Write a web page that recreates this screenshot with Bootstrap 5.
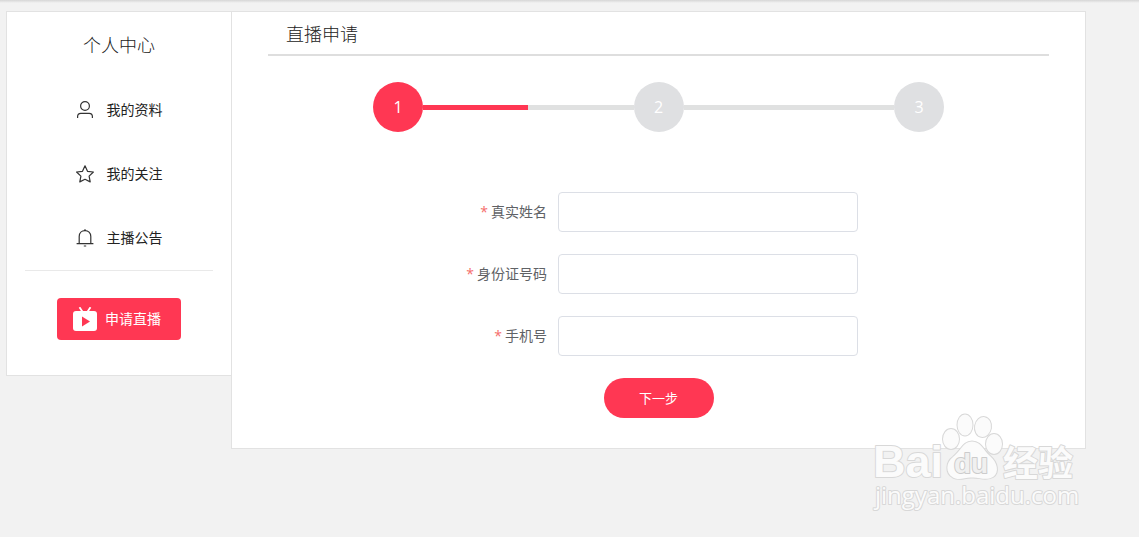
<!DOCTYPE html>
<html lang="zh-CN">
<head>
<meta charset="utf-8">
<meta name="viewport" content="width=device-width, initial-scale=1">
<title>直播申请</title>
<link href="https://cdn.jsdelivr.net/npm/bootstrap@5.3.0/dist/css/bootstrap.min.css" rel="stylesheet">
<style>
  :root { --live-red: #ff3753; --live-line: #e2e2e2; --step-gray: #dfe0e2; }
  body {
    font-family: "Open Sans", "Noto Sans CJK SC", sans-serif;
    font-size: 14px; line-height: 20px; font-weight: 400;
    color: #222; background: #f2f2f2;
    min-height: 100vh;
  }
  .top-edge { height: 3px; background: linear-gradient(#d6d6d6, #f2f2f2); }
  .page { padding: 8px 53px 0 6px; }
  .panel { background: #fff; border: 1px solid var(--live-line); }
  .side { width: 226px; padding: 19px 18px 35px; }
  .side .title { margin-bottom: 19px; }
  .content { margin-left: -1px; padding: 0 36px 30px; min-width: 0; }
  .title { font-size: 18px; line-height: 28px; font-weight: 300; margin: 0; }
  .side-menu a { height: 64px; gap: 13px; color: #222; text-decoration: none; }
  .side-menu svg { width: 18px; height: 18px; fill: none; stroke: #333; stroke-width: 1.2; }
  .side-rule { border-top: 1px solid #e9e9e9; }
  .side-action { padding-top: 27px; }
  .btn-live {
    --bs-btn-color: #fff; --bs-btn-bg: var(--live-red);
    --bs-btn-hover-color: #fff; --bs-btn-hover-bg: #e8304a;
    --bs-btn-active-color: #fff; --bs-btn-active-bg: #d82a43;
    --bs-btn-border-width: 0px; --bs-btn-font-weight: 400;
    --bs-btn-line-height: 20px;
  }
  .btn-apply { --bs-btn-font-size: 14px; --bs-btn-border-radius: 4px; width: 124px; height: 42px; gap: 8px; padding: 0 4px 0 0; }
  .btn-next { --bs-btn-font-size: 13px; width: 110px; height: 40px; padding: 0; }
  .content-head { padding: 8px 18px 6px; border-bottom: 2px solid #dedede; }
  .steps { width: 571px; max-width: 100%; margin: 26px auto 60px; }
  .step { width: 50px; height: 50px; background: var(--step-gray); color: #fff; font-size: 16px; font-weight: 400; }
  .step.current { background: var(--live-red); }
  .step-line { height: 5px; background: #e0e1e1; }
  .step-line .progress-bar { background: var(--live-red); }
  .apply-form { width: 401px; max-width: 100%; }
  .apply-form .form-row { margin-bottom: 22px; }
  .apply-form label { width: 100px; padding-right: 11px; text-align: right; color: #606266; }
  .apply-form label span { color: #f56c6c; margin-right: 3px; }
  .apply-form .form-control { max-width: 300px; height: 40px; border-color: #dcdfe6; border-radius: 4px; font-size: 14px; color: #606266; }
  .watermark { right: 56px; bottom: 19px; width: 216px; height: 108px; pointer-events: none; }
</style>
</head>
<body class="position-relative">
<div class="top-edge"></div>
<div class="page d-flex align-items-start">
  <aside class="side panel flex-shrink-0">
    <h2 class="title text-center">个人中心</h2>
    <nav class="side-menu d-flex flex-column">
      <a href="#profile" class="d-flex align-items-center justify-content-center">
        <svg viewBox="0 0 18 18" aria-hidden="true"><circle cx="9" cy="5" r="4.4"/><path d="M1.600 17v-1.400c0-2 1.400-3.200 3.200-3.200h8.400c1.800 0 3.200 1.200 3.200 3.200V17"/></svg>
        <span>我的资料</span>
      </a>
      <a href="#follow" class="d-flex align-items-center justify-content-center">
        <svg viewBox="0 0 18 18" aria-hidden="true"><path stroke-linejoin="round" d="M9 .8l2.500 5.500 5.900.7-4.300 4.100 1.100 5.800L9 14.300l-5.200 2.600 1.100-5.800L.6 7l5.900-.7z"/></svg>
        <span>我的关注</span>
      </a>
      <a href="#notice" class="d-flex align-items-center justify-content-center">
        <svg viewBox="0 0 18 18" aria-hidden="true"><path d="M.6 14.600h16.800M3.200 14.600V7.400C3.200 3.800 5.800 1.600 9 1.600s5.800 2.200 5.800 5.800v7.200M8 1h2M7.800 17h2.400"/></svg>
        <span>主播公告</span>
      </a>
    </nav>
    <div class="side-rule"></div>
    <div class="side-action text-center">
      <button type="button" class="btn btn-live btn-apply d-inline-flex align-items-center justify-content-center align-top">
        <svg width="24" height="24" viewBox="0 0 24 24" aria-hidden="true"><path d="M6.500 .2l3 4.500M17.500 .2l-3 4.500" stroke="#fff" stroke-width="1.800"/><rect y="4" width="24" height="20" rx="3" fill="#fff"/><path d="M9 9.500v10l8-5z" fill="#ff3753"/></svg>
        <span>申请直播</span>
      </button>
    </div>
  </aside>

  <main class="content panel flex-grow-1">
    <div class="content-head"><h1 class="title">直播申请</h1></div>
    <div class="steps d-flex align-items-center">
      <div class="step current rounded-circle d-flex align-items-center justify-content-center flex-shrink-0">1</div>
      <div class="step-line flex-fill"><div class="progress-bar h-100 w-50"></div></div>
      <div class="step rounded-circle d-flex align-items-center justify-content-center flex-shrink-0">2</div>
      <div class="step-line flex-fill"></div>
      <div class="step rounded-circle d-flex align-items-center justify-content-center flex-shrink-0">3</div>
    </div>
    <form class="apply-form mx-auto">
      <div class="form-row d-flex align-items-center">
        <label for="realName" class="flex-shrink-0"><span>*</span>真实姓名</label>
        <input type="text" class="form-control" id="realName">
      </div>
      <div class="form-row d-flex align-items-center">
        <label for="idNumber" class="flex-shrink-0"><span>*</span>身份证号码</label>
        <input type="text" class="form-control" id="idNumber">
      </div>
      <div class="form-row d-flex align-items-center">
        <label for="phone" class="flex-shrink-0"><span>*</span>手机号</label>
        <input type="tel" class="form-control" id="phone">
      </div>
      <div class="text-center">
        <button type="button" class="btn btn-live btn-next rounded-pill align-top">下一步</button>
      </div>
    </form>
  </main>
</div>

<svg class="watermark position-absolute" viewBox="0 0 216 108">
  <g fill="#fbfbfb" stroke="#d8d8d8" stroke-width="2" paint-order="stroke" stroke-linejoin="round">
    <g stroke-width="2">
      <ellipse cx="84" cy="29" rx="8" ry="10"/>
      <ellipse cx="98" cy="15" rx="7.500" ry="10.500"/>
      <ellipse cx="116" cy="17" rx="8" ry="10" transform="rotate(10 116 17)"/>
      <ellipse cx="127" cy="34" rx="8" ry="10"/>
      <path d="M105 31.500C96 31.500 94 41 86 47C79 52 78 63 86 67.500C93 71 98 67 105 67.500C112 67 119 71 126 67C133 62 130 52 123 46C116 40 114 31.500 105 31.500Z"/>
    </g>
    <text x="6" y="67" font-family="Liberation Sans, sans-serif" font-weight="700" font-size="45">Bai</text>
    <text x="87" y="63" font-family="Liberation Sans, sans-serif" font-weight="700" font-size="28" fill="#f0f0f0" stroke="#ccc">du</text>
    <text x="136" y="66" font-family="Liberation Sans, Noto Sans CJK SC, sans-serif" font-weight="700" font-size="35">经验</text>
    <text x="8" y="94" font-family="Open Sans, sans-serif" font-weight="400" font-size="24">jingyan.baidu.com</text>
  </g>
</svg>
<script src="https://cdn.jsdelivr.net/npm/bootstrap@5.3.0/dist/js/bootstrap.bundle.min.js"></script>
</body>
</html>
